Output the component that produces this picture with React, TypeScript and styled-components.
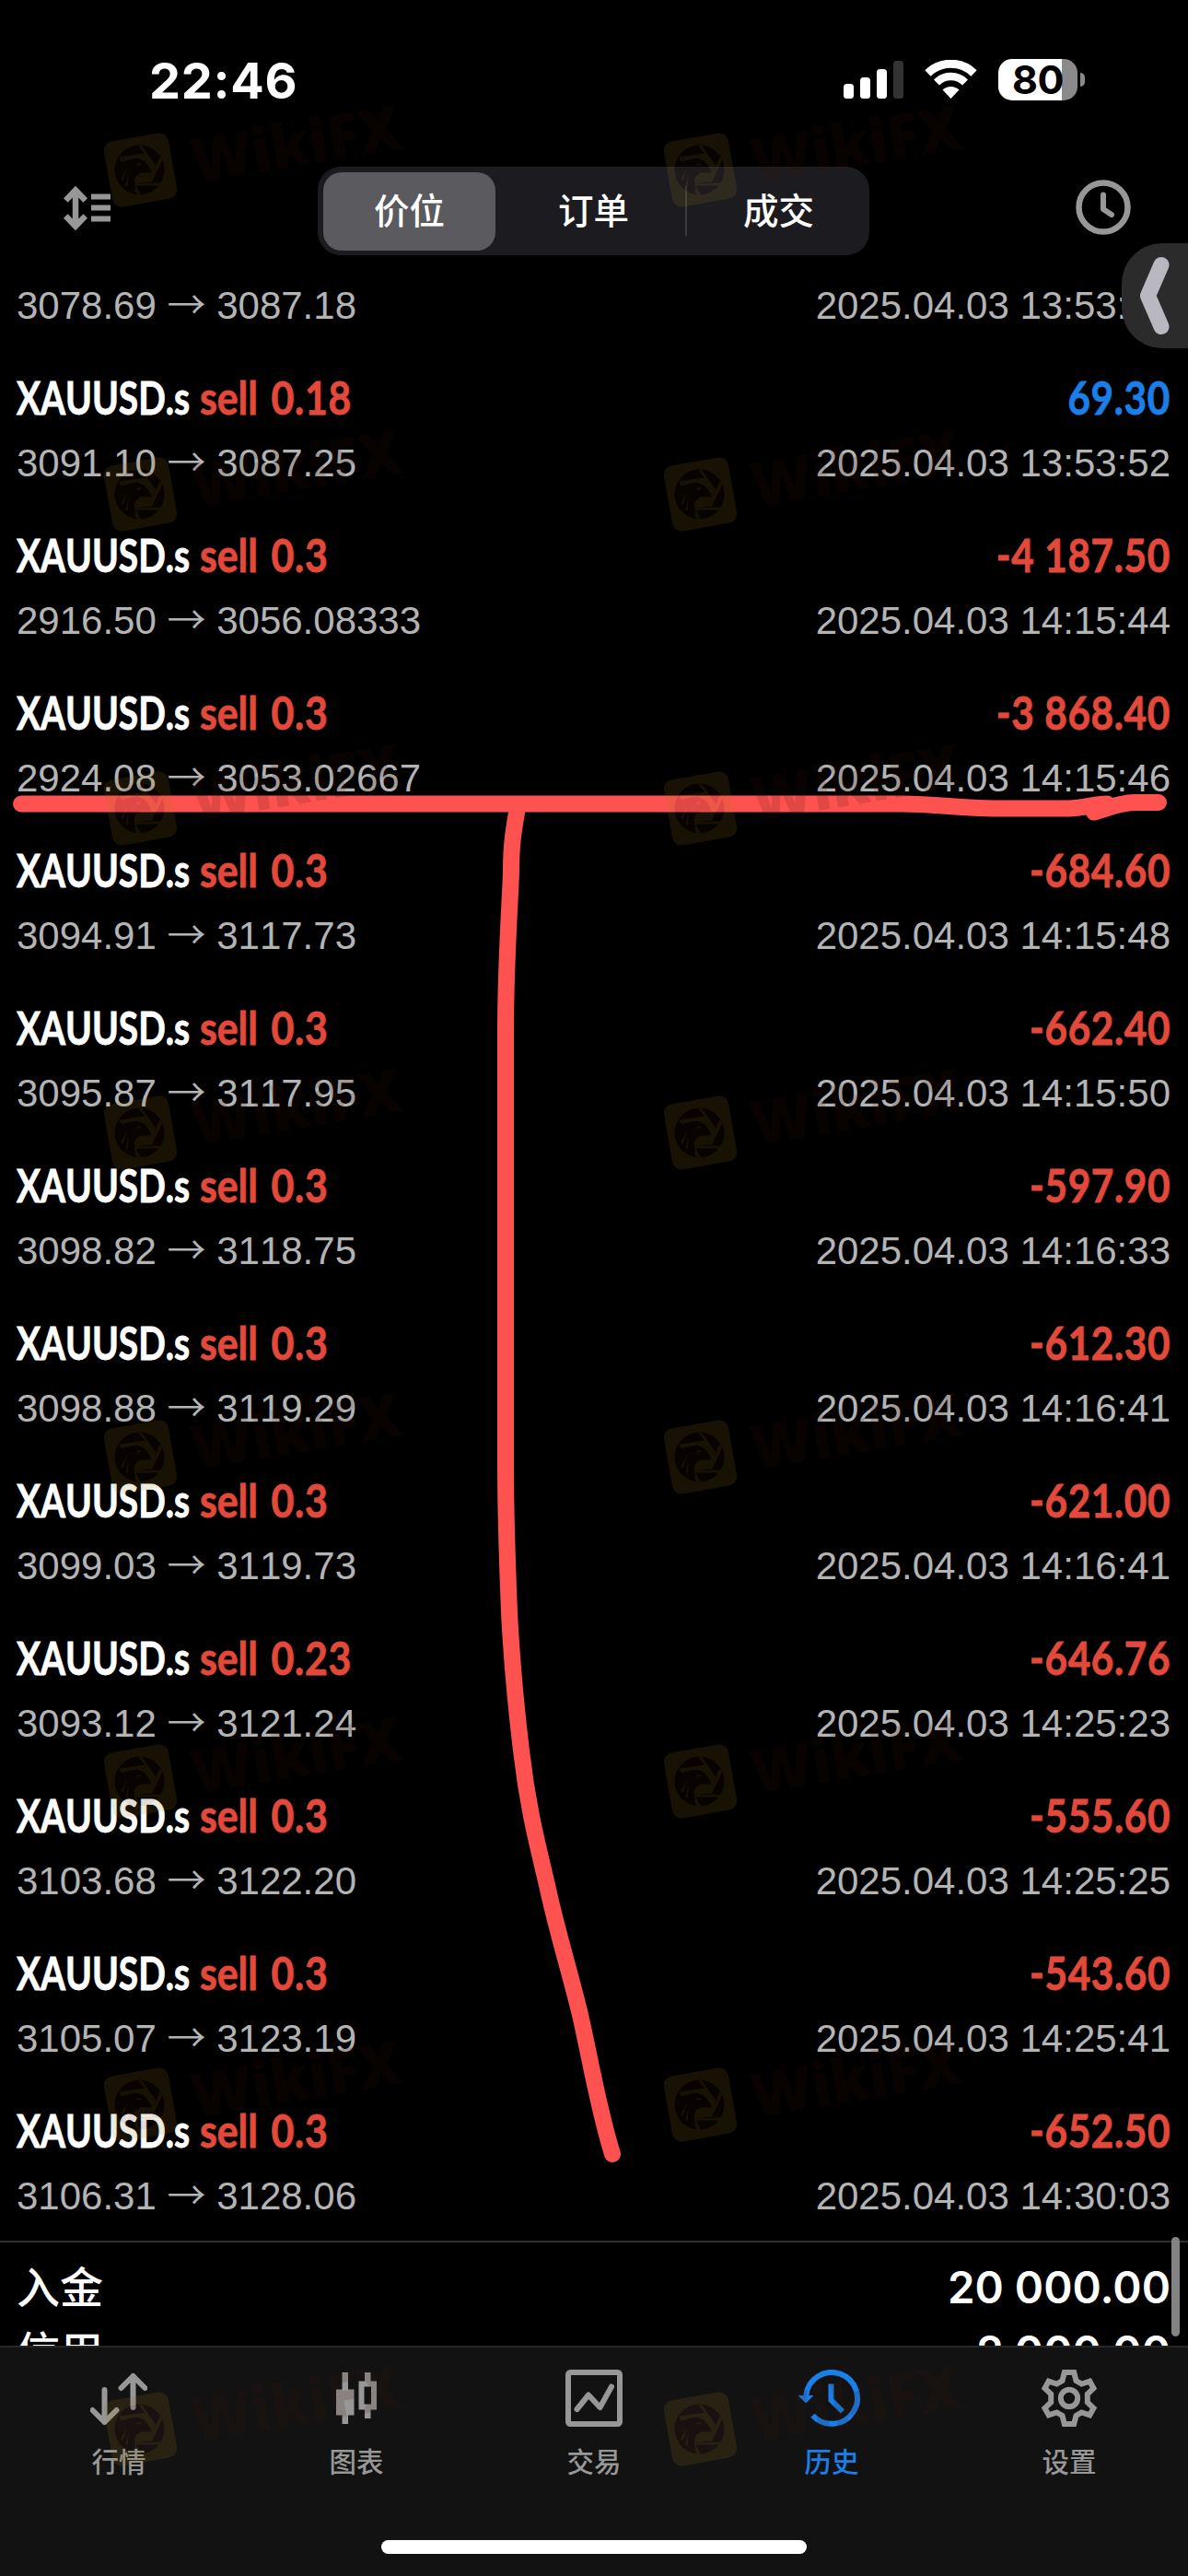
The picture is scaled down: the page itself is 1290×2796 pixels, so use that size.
import React from "react";
import styled, { createGlobalStyle } from "styled-components";

const CJK = `"Noto Sans CJK SC", sans-serif`;
const GREY = "#979797";
const RED = "#e2493a";
const BLUE = "#1a7fe8";

const GlobalStyle = createGlobalStyle`
  body { margin: 0; background: #000; }
  * { box-sizing: border-box; }
`;

const Screen = styled.div`
  position: relative;
  display: flex;
  flex-direction: column;
  width: 1290px;
  height: 2796px;
  overflow: hidden;
  background: #000;
  color: #fff;
  font-family: "Liberation Sans", Arial, sans-serif;
`;

/* ---------- status bar ---------- */

const StatusBar = styled.header`
  display: flex;
  flex: none;
  justify-content: space-between;
  height: 132px;
  padding: 62px 112px 0 162px;
`;

const Time = styled.div`
  height: 52px;
  font: 700 54px/52px Inter, sans-serif;
  letter-spacing: 0.7px;
`;

const StatusIcons = styled.div`
  display: flex;
  align-items: flex-start;
  padding-top: 2px;
`;

const SignalIcon = styled.svg`
  margin: 2px 23px 0 0;
`;

const WifiIcon = styled.svg`
  margin: 1px 23px 0 0;
`;

const Battery = styled.div`
  display: flex;
  align-items: center;
  justify-content: center;
  width: 86px;
  height: 45px;
  border-radius: 15px;
  background: linear-gradient(90deg, #fff 80%, #8a8a8a 80%);
  color: #000;
  font: 700 43px/45px Inter, sans-serif;
  letter-spacing: -0.5px;
`;

const BatteryNub = styled.div`
  width: 5px;
  height: 15px;
  margin: 15px 0 0 3px;
  border-radius: 0 5px 5px 0;
  background: #8a8a8a;
`;

/* ---------- toolbar ---------- */

const Toolbar = styled.nav`
  display: flex;
  flex: none;
  align-items: flex-start;
  justify-content: space-between;
  height: 165px;
  padding: 49px 62px 0 68px;
`;

const SortIcon = styled.svg`
  margin-top: 20px;
`;

const ClockIcon = styled.svg`
  margin-top: 14px;
`;

const Segments = styled.div`
  display: flex;
  align-items: center;
  width: 599px;
  height: 96px;
  margin-right: 1px;
  padding: 0 6px;
  border-radius: 25px;
  background: #1c1c20;
`;

const Segment = styled.button<{ $active?: boolean; $width: number }>`
  width: ${(p) => p.$width}px;
  height: 85px;
  padding: ${(p) => (p.$active ? "0 0 6px 0" : "0 0 6px 7px")};
  border: 0;
  border-radius: 20px;
  background: ${(p) => (p.$active ? "#5b5a5f" : "transparent")};
  color: #fff;
  font: 500 38.5px/78px ${CJK};
`;

const SegmentDivider = styled.div`
  width: 2px;
  height: 54px;
  background: #3c3c40;
`;

/* ---------- history list ---------- */

const History = styled.main`
  flex: 1;
  min-height: 0;
  overflow: hidden;
`;

const Deal = styled.article<{ $headless?: boolean }>`
  height: ${(p) => (p.$headless ? 83 : 171)}px;
  padding: ${(p) => (p.$headless ? 0 : 16)}px 19px 0 18px;
`;

const DealTitle = styled.div`
  display: flex;
  height: 72px;
  font-family: Lato, sans-serif;
  font-size: 50px;
  font-weight: 700;
  font-kerning: none;
  line-height: 70px;
  white-space: pre;
  -webkit-text-stroke: 0.9px currentColor;
`;

const Symbol = styled.div`
  width: 199px;
  transform: scaleX(0.778);
  transform-origin: left;
`;

const Side = styled.div`
  color: ${RED};
  transform: scaleX(0.855);
  transform-origin: left;
`;

const Volume = styled.span`
  margin-left: 5px;
  letter-spacing: 0.9px;
`;

const Profit = styled.div<{ $positive: boolean }>`
  margin-left: auto;
  color: ${(p) => (p.$positive ? BLUE : RED)};
  letter-spacing: 0.8px;
  transform: scaleX(0.845);
  transform-origin: right;
`;

const DealDetail = styled.div`
  display: flex;
  justify-content: space-between;
  height: 70px;
  color: #b4b4b4;
  font-size: 42px;
  font-kerning: none;
  line-height: 70px;
  white-space: pre;
`;

const Arrow = styled.span`
  font-family: ${CJK};
  font-weight: 350;
  line-height: 1;
`;

const Summary = styled.section`
  padding: 13px 19px 0 18px;
  border-top: 2px solid #303030;
`;

const SummaryRow = styled.div`
  display: flex;
  justify-content: space-between;
  height: 70px;
  line-height: 70px;
`;

const SummaryLabel = styled.span`
  font: 500 47px/65px ${CJK};
`;

const SummaryValue = styled.span`
  font: 600 47.5px/71px Inter, sans-serif;
`;

/* ---------- tab bar ---------- */

const TabBar = styled.footer`
  display: flex;
  flex: none;
  flex-direction: column;
  align-items: center;
  justify-content: space-between;
  height: 250px;
  padding-bottom: 24px;
  border-top: 2px solid #262626;
  background: #121212;
`;

const Tabs = styled.div`
  display: flex;
  width: 100%;
`;

const Tab = styled.div<{ $active?: boolean }>`
  display: flex;
  flex: 1;
  flex-direction: column;
  align-items: center;
  padding-top: 24px;
  color: ${(p) => (p.$active ? BLUE : GREY)};
`;

const TabLabel = styled.span`
  height: 46px;
  margin-top: 13px;
  font: 500 29.5px/46px ${CJK};
`;

const HomeIndicator = styled.div`
  width: 462px;
  height: 15px;
  border-radius: 8px;
  background: #fff;
`;

/* ---------- overlays ---------- */

const ScrollThumb = styled.div`
  position: absolute;
  top: 2428px;
  right: 9px;
  width: 9px;
  height: 108px;
  border-radius: 5px;
  background: #838383;
`;

const DrawerHandle = styled.div`
  position: absolute;
  top: 264px;
  right: 0;
  width: 72px;
  height: 114px;
  border-radius: 44px 0 0 44px;
  background: #2b2b2b;
`;

const Annotation = styled.svg`
  position: absolute;
  inset: 0;
`;

const WatermarkMark = styled.svg<{ $x: number; $y: number }>`
  position: absolute;
  left: ${(p) => p.$x}px;
  top: ${(p) => p.$y}px;
  opacity: 0.15;
  pointer-events: none;
`;

function Watermark({ x, y }: { x: number; y: number }) {
  return (
    <WatermarkMark $x={x} $y={y} width="345" height="125" viewBox="0 0 345 125">
      <g transform="translate(47.5 79.5)">
        <rect x="-35.5" y="-36" width="71" height="72" rx="10" fill="#9c7c17" transform="rotate(-10)" />
        <g transform="translate(-1 0)">
          <circle r="27" fill="#341607" />
          <path
            d="M6 -18L17 -4L12 13L-5 15L-6 8L1 3L13 3L9 -5L-2 -13L-20 -9L-22 -14Z M-2 15L24 14L24 17L-4 17L2 28L-2 28L-9 16Z M2 -27L19 -3L17 -4L-1 -26Z M25 -11L13 14L11 12L22 -14Z"
            fill="#9c7c17"
          />
          <path d="M-26 2C-24 -8 -12 -13 -2 -12C6 -12 9 -5 13 1C8 -1 4 0 0 3C-6 7 -7 12 -4 22L-14 17C-22 12 -26 8 -26 2Z" fill="#341607" />
          <path d="M-4 -7l6 0l-3 2.500Z M-15 17l3 -13l-1 14Z M-20 10l6 -11l-4 13Z" fill="#9c7c17" />
        </g>
      </g>
      <text
        transform="translate(107 93.500) rotate(-9.5)"
        fontFamily="Open Sans, sans-serif"
        fontWeight="800"
        fontSize="66"
        textLength="230"
        lengthAdjust="spacingAndGlyphs"
        fill="#3a1205"
      >
        WikiFX
      </text>
    </WatermarkMark>
  );
}

const QuotesIcon = () => (
  <svg width="62" height="62" fill="none" stroke="currentColor" strokeWidth="6" strokeLinecap="round" strokeLinejoin="round">
    <path d="M15.500 22V57M2.500 44L15.500 57L28.500 44M46.500 41V7M33.500 20L46.500 7L59.500 20" />
  </svg>
);

const ChartIcon = () => (
  <svg width="62" height="62" fill="currentColor">
    <path d="M15.500 3h6.500v18.500h6.500v28h-6.500V59h-6.500v-9.500H9v-28h6.500z" />
    <path fillRule="evenodd" d="M40 3h6.500v9.500H53v31h-6.500V53H40v-9.500h-6.500v-31H40zM39.500 18.500v19h7.500v-19z" />
  </svg>
);

const TradeIcon = () => (
  <svg width="62" height="62" fill="none" stroke="currentColor" strokeWidth="6" strokeLinecap="round" strokeLinejoin="round">
    <rect x="3" y="3" width="56" height="56" rx="2.500" />
    <path d="M12.500 43L25 27.500L37.500 41L50 18.500" />
  </svg>
);

const HistoryIcon = () => (
  <svg width="74" height="62" viewBox="-5 0 74 62" fill="none" stroke="currentColor" strokeWidth="6">
    <path d="M4.300 28A27.900 27.900 0 1 1 11.500 49.800" />
    <path d="M-4.500 28H12.500L4 36.500Z" fill="currentColor" stroke="none" />
    <path d="M31.500 15.500V33L44 45.500" />
  </svg>
);

const SettingsIcon = () => (
  <svg width="62" height="62" viewBox="-31 -31 62 62" fill="none" stroke="currentColor" strokeWidth="6">
    <path d="M-5.200 -28H5.200L7.500 -19L13.500 -15.500L22.300 -18.300L26.500 -10.800L19.800 -4.500V4.500L26.500 10.800L22.300 18.300L13.500 15.500L7.500 19L5.200 28H-5.200L-7.500 19L-13.500 15.500L-22.300 18.300L-26.500 10.800L-19.800 4.500V-4.500L-26.500 -10.800L-22.300 -18.300L-13.500 -15.500L-7.500 -19Z" />
    <circle r="9.200" />
  </svg>
);

const tabs = [
  { label: "行情", icon: <QuotesIcon /> },
  { label: "图表", icon: <ChartIcon /> },
  { label: "交易", icon: <TradeIcon /> },
  { label: "历史", icon: <HistoryIcon />, active: true },
  { label: "设置", icon: <SettingsIcon /> },
];

type DealData = { volume?: string; open: string; close: string; profit?: string; time: string };

const deals: DealData[] = [
  { open: "3078.69", close: "3087.18", time: "13:53:52" },
  { volume: "0.18", open: "3091.10", close: "3087.25", profit: "69.30", time: "13:53:52" },
  { volume: "0.3", open: "2916.50", close: "3056.08333", profit: "-4 187.50", time: "14:15:44" },
  { volume: "0.3", open: "2924.08", close: "3053.02667", profit: "-3 868.40", time: "14:15:46" },
  { volume: "0.3", open: "3094.91", close: "3117.73", profit: "-684.60", time: "14:15:48" },
  { volume: "0.3", open: "3095.87", close: "3117.95", profit: "-662.40", time: "14:15:50" },
  { volume: "0.3", open: "3098.82", close: "3118.75", profit: "-597.90", time: "14:16:33" },
  { volume: "0.3", open: "3098.88", close: "3119.29", profit: "-612.30", time: "14:16:41" },
  { volume: "0.3", open: "3099.03", close: "3119.73", profit: "-621.00", time: "14:16:41" },
  { volume: "0.23", open: "3093.12", close: "3121.24", profit: "-646.76", time: "14:25:23" },
  { volume: "0.3", open: "3103.68", close: "3122.20", profit: "-555.60", time: "14:25:25" },
  { volume: "0.3", open: "3105.07", close: "3123.19", profit: "-543.60", time: "14:25:41" },
  { volume: "0.3", open: "3106.31", close: "3128.06", profit: "-652.50", time: "14:30:03" },
];

const watermarkRows = [184.5, 536, 877, 1229, 1581, 1933, 2284, 2636];
const watermarkColumns = [152.5, 760];

export default function App() {
  return (
    <Screen>
      <GlobalStyle />
      <StatusBar>
        <Time>22:46</Time>
        <StatusIcons>
          <SignalIcon width="65" height="41" fill="#fff">
            <rect x="0" y="25" width="11" height="16" rx="3.500" />
            <rect x="18" y="18" width="11" height="23" rx="3.500" />
            <rect x="36" y="9" width="11" height="32" rx="3.500" />
            <rect x="54" y="0" width="11" height="41" rx="3.500" fill="#333" />
          </SignalIcon>
          <WifiIcon width="57" height="42" viewBox="0 0 57 42" fill="none" stroke="#fff">
            <path d="M3.500 14.500A35.500 35.500 0 0 1 53.500 14.500" strokeWidth="9" />
            <path d="M13 24.500A22 22 0 0 1 44 24.500" strokeWidth="8.500" />
            <path d="M28.500 42L19.500 32.500A13 13 0 0 1 37.500 32.500Z" fill="#fff" stroke="none" />
          </WifiIcon>
          <Battery>80</Battery>
          <BatteryNub />
        </StatusIcons>
      </StatusBar>

      <Toolbar>
        <SortIcon width="54" height="50" fill="none" stroke={GREY}>
          <path d="M14 6V44M3.300 16.500L14 5.500L24.700 16.500M3.300 33.500L14 44.500L24.700 33.500" strokeWidth="6.500" />
          <path d="M31 12.500H52M31 24.500H52M31 36.500H52" strokeWidth="6" />
        </SortIcon>
        <Segments>
          <Segment $active $width={187}>价位</Segment>
          <Segment $width={206}>订单</Segment>
          <SegmentDivider />
          <Segment $width={192}>成交</Segment>
        </Segments>
        <ClockIcon width="60" height="60" fill="none" stroke={GREY} strokeLinecap="round" strokeLinejoin="round">
          <circle cx="30" cy="30" r="26.500" strokeWidth="6.500" />
          <path d="M30 16.500V32L39 38" strokeWidth="6" />
        </ClockIcon>
      </Toolbar>

      <History>
        {deals.map((deal, index) => (
          <Deal key={index} $headless={!deal.volume}>
            {deal.volume && deal.profit && (
              <DealTitle>
                <Symbol>XAUUSD.s</Symbol>
                <Side>
                  sell <Volume>{deal.volume}</Volume>
                </Side>
                <Profit $positive={!deal.profit.startsWith("-")}>{deal.profit}</Profit>
              </DealTitle>
            )}
            <DealDetail>
              <span>
                {deal.open} <Arrow>→</Arrow> {deal.close}
              </span>
              <span>2025.04.03 {deal.time}</span>
            </DealDetail>
          </Deal>
        ))}
        <Summary>
          <SummaryRow>
            <SummaryLabel>入金</SummaryLabel>
            <SummaryValue>20 000.00</SummaryValue>
          </SummaryRow>
          <SummaryRow>
            <SummaryLabel>信用</SummaryLabel>
            <SummaryValue>2 000.00</SummaryValue>
          </SummaryRow>
        </Summary>
      </History>

      <TabBar>
        <Tabs>
          {tabs.map((tab) => (
            <Tab key={tab.label} $active={tab.active}>
              {tab.icon}
              <TabLabel>{tab.label}</TabLabel>
            </Tab>
          ))}
        </Tabs>
        <HomeIndicator />
      </TabBar>

      <ScrollThumb />
      <DrawerHandle>
        <svg width="72" height="114" fill="none" stroke="#b9b8c0" strokeWidth="17" strokeLinecap="round" strokeLinejoin="round">
          <path d="M43 23.500L28.500 57L43 90.500" />
        </svg>
      </DrawerHandle>

      <Annotation width="1290" height="2796" fill="none" stroke="#fe5250" strokeWidth="18" strokeLinecap="round" strokeLinejoin="round">
        <path d="M23 872.500H980C1020 873 1040 877 1080 877.500H1160C1178 877 1186 873 1202 872.500L1188 881.500C1204 877 1214 871.500 1232 871H1258" />
        <path d="M562 876C558 900 555 915 555 945C555 960 549 1040 549 1120V1590C549 1650 551 1700 553 1750C556 1810 560 1850 566 1900C574 1970 586 2010 596 2055C606 2100 620 2145 630 2187C642 2240 650 2290 665 2338" />
      </Annotation>

      {watermarkRows.map((y) =>
        watermarkColumns.map((x) => <Watermark key={`${x}-${y}`} x={x - 47.5} y={y - 79.5} />)
      )}
    </Screen>
  );
}
